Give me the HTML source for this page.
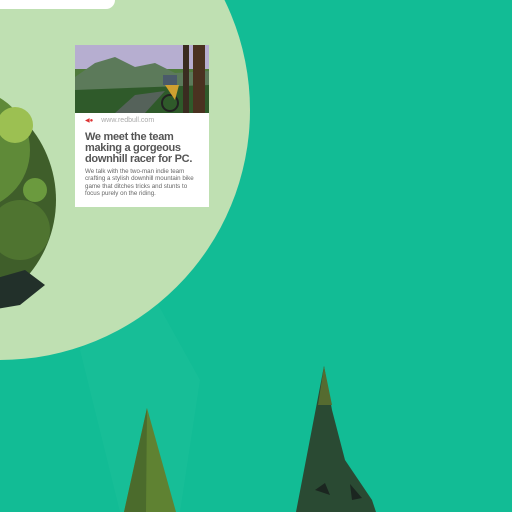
<!DOCTYPE html><html><head><style>
body{margin:0;width:512px;height:512px;overflow:hidden;background:#12bc95;position:relative;font-family:"Liberation Sans",sans-serif}
.a{position:absolute}
</style></head><body>
<svg class="a" style="left:0;top:0" width="512" height="512">
<polygon points="80,350 150,290 200,380 180,512 120,512" fill="#1cc099" opacity=".5"/>
<circle cx="0" cy="110" r="250" fill="#bfe0b2"/>
<circle cx="-60" cy="200" r="116" fill="#3f5e2a"/>
<circle cx="-30" cy="150" r="60" fill="#5f8a38"/>
<circle cx="20" cy="230" r="30" fill="#4f7430"/>
<circle cx="15" cy="125" r="18" fill="#9cc052"/>
<circle cx="35" cy="190" r="12" fill="#6b9a3e"/>
<path d="M-10,280 L25,270 L45,285 L20,305 L-10,310Z" fill="#22302a"/>
<polygon points="147,408 124,512 176,512" fill="#5f8232"/>
<polygon points="147,408 124,512 146,512" fill="#4b6b2c"/>
<polygon points="324,366 296,512 376,512 372,500 345,460 332,410" fill="#2a4a33"/>
<polygon points="324,366 332,405 318,405" fill="#556b30"/>
<polygon points="315,490 325,483 330,495" fill="#1b2620"/>
<polygon points="350,484 362,498 352,500" fill="#1b2620"/>
</svg>
<div class="a" style="left:0;top:0;width:115px;height:9px;background:#fff;border-bottom-right-radius:9px"></div>
<div class="a" style="left:75px;top:45px;width:134px;height:162px;background:#fff">
<svg width="134" height="68" style="display:block">
<rect width="134" height="68" fill="#4f7a3c"/>
<rect width="134" height="24" fill="#b6aed0"/>
<polygon points="0,32 20,18 40,12 60,22 80,18 100,28 134,26 134,45 0,45" fill="#5c7a5a"/>
<polygon points="0,45 134,40 134,68 0,68" fill="#2f5a2a"/>
<polygon points="40,68 60,50 90,46 70,68" fill="#55625a"/>
<rect x="150" y="0" width="8" height="68" fill="#3a2c20"/>
<rect x="108" y="0" width="6" height="68" fill="#3a2c20"/>
<rect x="118" y="0" width="12" height="68" fill="#4a3220"/>
<rect x="88" y="30" width="14" height="10" fill="#4a5a6a"/>
<circle cx="95" cy="58" r="8" fill="none" stroke="#222" stroke-width="2"/>
<polygon points="90,40 104,40 100,55" fill="#d0a030"/>
</svg>
<div style="padding:4px 10px 0 10px">
<div style="font-size:7px;color:#aaa;height:12px"><span style="color:#d33;font-size:6px;margin-right:8px">◀●</span>www.redbull.com</div>
<div style="font-size:11px;font-weight:bold;color:#555;line-height:11px;margin-top:3px;letter-spacing:-0.3px">We meet the team making a gorgeous downhill racer for PC.</div>
<div style="font-size:6.2px;color:#666;line-height:7.3px;margin-top:3px">We talk with the two-man indie team crafting a stylish downhill mountain bike game that ditches tricks and stunts to focus purely on the riding.</div>
</div></div>
</body></html>
